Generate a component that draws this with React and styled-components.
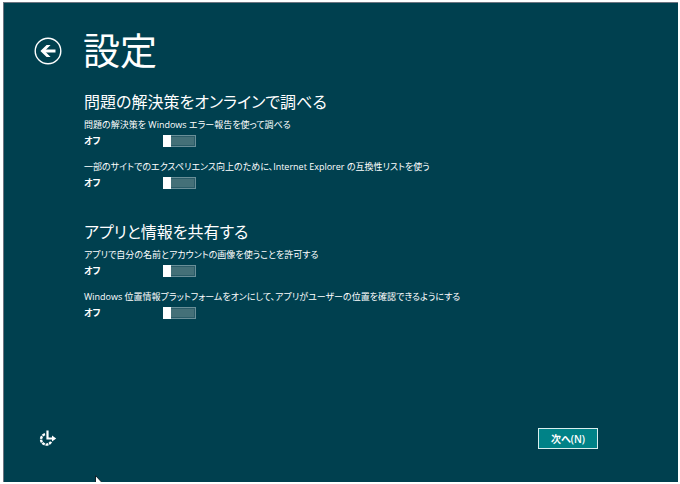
import React, { useId, useState } from "react";
import styled, { createGlobalStyle } from "styled-components";

const GlobalStyle = createGlobalStyle`
  * { box-sizing: border-box; }
  html, body { margin: 0; background: #fff; }
  button, input { font: inherit; color: inherit; margin: 0; padding: 0; }
`;

const Frame = styled.div`
  padding: 2px 2px 2px 3px;
  display: flex;
  overflow: hidden;
  height: 100vh;
  color: #fff;
  font-family: "Open Sans", "Noto Sans CJK JP", sans-serif;
  font-feature-settings: "palt";
  font-size: 9px;
`;

const Screen = styled.div`
  position: relative;
  flex: 1;
  display: flex;
  flex-direction: column;
  overflow: hidden;
  background: #00404f;
  border-top: 1px solid #6d7480;
  border-left: 1px solid #6d7480;
`;

const Header = styled.header`
  display: flex;
  align-items: center;
  gap: 21px;
  padding: 24px 30px 0;
`;

const BackButton = styled.button`
  display: block;
  width: 28px;
  height: 28px;
  border: 0;
  background: none;
  svg { display: block; }
`;

const Title = styled.h1`
  margin: 0;
  font-size: 37px;
  line-height: 48px;
  font-weight: 400;
`;

const Main = styled.main`
  flex: 1;
  display: flex;
  flex-direction: column;
  gap: 28px;
  padding: 14px 30px 0 80px;
`;

const SectionTitle = styled.h2`
  margin: 0 0 2px;
  font-size: 16px;
  line-height: 26px;
  font-weight: 400;
`;

const Options = styled.div`
  display: flex;
  flex-direction: column;
  gap: 10px;
`;

const OptionLabel = styled.label`
  display: block;
  line-height: 16px;
  white-space: nowrap;
`;

const OptionRow = styled.div`
  display: grid;
  grid-template-columns: 79px auto;
  justify-content: start;
  align-items: center;
  height: 16px;
`;

const State = styled.span`
  font-weight: 700;
  line-height: 16px;
`;

const Switch = styled.input`
  appearance: none;
  display: block;
  width: 33px;
  height: 12px;
  border: 1px solid #6a8f98;
  background: #447078;
  box-shadow: inset 0 0 0 1px #2b5c68;
  &::before {
    content: "";
    display: block;
    width: 8px;
    height: 12px;
    margin: -1px;
    background: #fff;
  }
  &:checked { background: #008287; }
  &:checked::before { margin-left: 24px; }
`;

const Footer = styled.footer`
  display: flex;
  align-items: center;
  justify-content: space-between;
  padding: 0 80px 33px 35px;
`;

const AccessButton = styled.button`
  width: 18px;
  height: 18px;
  border: 0;
  background: none;
  svg { display: block; }
`;

const NextButton = styled.button`
  width: 60px;
  height: 21px;
  border: 1px solid #d9eeee;
  background: #008287;
  font-size: 10px;
  font-weight: 600;
  line-height: 16px;
`;

const Pointer = styled.svg`
  position: absolute;
  left: 91px;
  top: 472px;
`;

const sections = [
  {
    title: "問題の解決策をオンラインで調べる",
    options: [
      "問題の解決策を Windows エラー報告を使って調べる",
      "一部のサイトでのエクスペリエンス向上のために、Internet Explorer の互換性リストを使う",
    ],
  },
  {
    title: "アプリと情報を共有する",
    options: [
      "アプリで自分の名前とアカウントの画像を使うことを許可する",
      "Windows 位置情報プラットフォームをオンにして、アプリがユーザーの位置を確認できるようにする",
    ],
  },
];

function Option({ text }) {
  const id = useId();
  const [on, setOn] = useState(false);
  return (
    <div>
      <OptionLabel htmlFor={id}>{text}</OptionLabel>
      <OptionRow>
        <State>{on ? "オン" : "オフ"}</State>
        <Switch id={id} type="checkbox" role="switch" checked={on} onChange={() => setOn(!on)} />
      </OptionRow>
    </div>
  );
}

export default function App() {
  return (
    <>
      <GlobalStyle />
      <Frame>
        <Screen>
          <Header>
            <BackButton type="button" aria-label="戻る">
              <svg width="28" height="28" viewBox="0 0 28 28" fill="none" stroke="#fff">
                <circle cx="14" cy="14" r="12.8" strokeWidth="1.4" />
                <path d="M21.5 14H9" strokeWidth="3" />
                <path d="M16.6 8H12.6L6.4 14l6.2 6h4L10.6 14z" fill="#fff" stroke="none" />
              </svg>
            </BackButton>
            <Title>設定</Title>
          </Header>
          <Main>
            {sections.map((s) => (
              <section key={s.title}>
                <SectionTitle>{s.title}</SectionTitle>
                <Options>
                  {s.options.map((o) => <Option key={o} text={o} />)}
                </Options>
              </section>
            ))}
          </Main>
          <Footer>
            <AccessButton type="button" aria-label="簡単操作">
              <svg width="18" height="18" viewBox="0 0 18 18" fill="none" stroke="#fff">
                <path d="M6 4.2A5.3 5.3 0 1 0 12.2 11.4" strokeWidth="2.4" strokeDasharray="2.8 0.8" />
                <path d="M8.5 0.5V8.5H15" strokeWidth="2.2" />
                <path d="M13 5.6L17.2 8.5 13 11.4z" fill="#fff" stroke="none" />
              </svg>
            </AccessButton>
            <NextButton type="button">次へ(N)</NextButton>
          </Footer>
          <Pointer width="12" height="18" viewBox="0 0 12 18" aria-hidden="true">
            <path d="M0.5 0.5V16l3.6-3.4 2.4 5 2-1-2.4-4.8H11z" fill="#fff" stroke="#10222a" />
          </Pointer>
        </Screen>
      </Frame>
    </>
  );
}
